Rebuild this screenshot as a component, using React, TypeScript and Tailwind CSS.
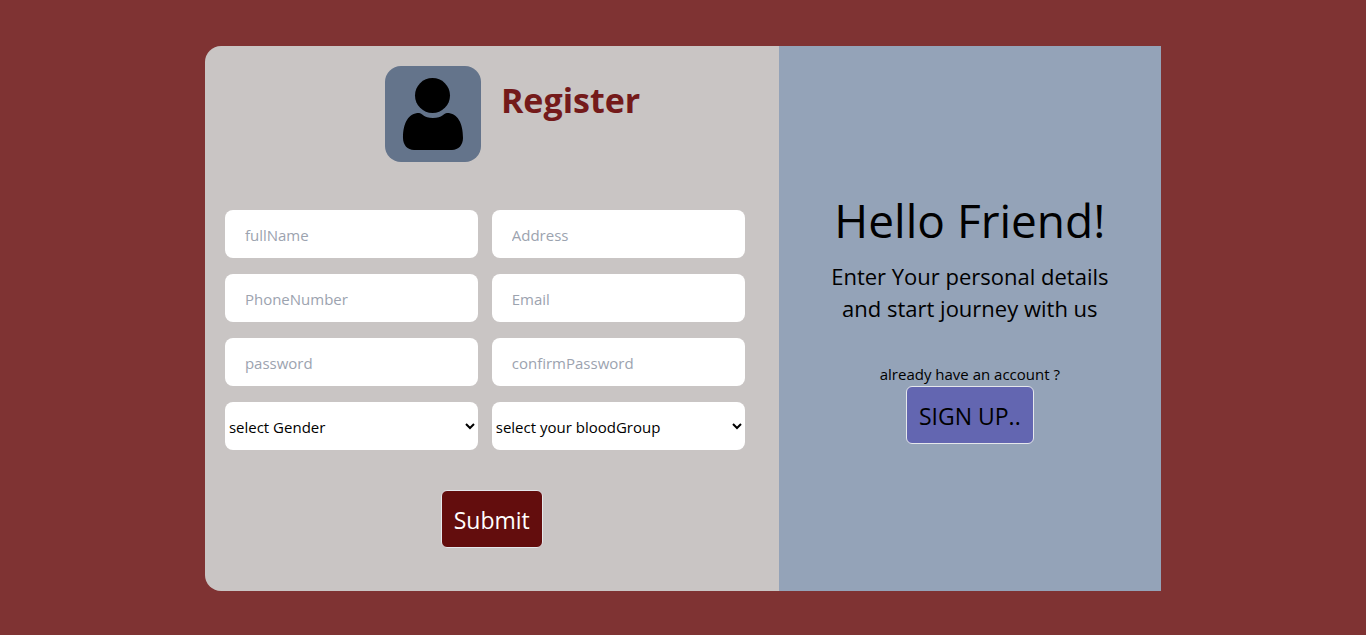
const fields = [
  { name: "fullName", type: "text" },
  { name: "Address", type: "text" },
  { name: "PhoneNumber", type: "tel" },
  { name: "Email", type: "email" },
  { name: "password", type: "password" },
  { name: "confirmPassword", type: "password" },
];

const selects = [
  { label: "select Gender", options: ["Male", "Female", "Other"] },
  { label: "select your bloodGroup", options: ["A+", "A-", "B+", "B-", "AB+", "AB-", "O+", "O-"] },
];

function Avatar() {
  return (
    <div className="size-24 shrink-0 rounded-2xl bg-[#64748b]">
      <svg viewBox="0 0 96 96" className="size-full" aria-hidden="true">
        <circle cx="47.5" cy="29.5" r="17.5" />
        <path d="M34 47C37 47 38.5 52 48 52C57.500 52 59 47 62 47C72.500 47 78 57 78 72C78 79 73.500 84 67 84H29C22.500 84 18 79 18 72C18 57 23.500 47 34 47Z" />
      </svg>
    </div>
  );
}

function RegisterForm() {
  return (
    <form className="w-3/5 rounded-l-2xl bg-[#c9c5c4] p-5 pb-[43px]" onSubmit={(e) => e.preventDefault()}>
      <div className="ml-40 flex gap-5">
        <Avatar />
        <h1 className="mt-3.5 text-[34px] leading-10 font-bold text-[#741a1a]">Register</h1>
      </div>
      <div className="mt-12 mr-3.5 grid grid-cols-2 gap-x-3.5 gap-y-4">
        {fields.map((f) => (
          <input
            key={f.name}
            type={f.type}
            aria-label={f.name}
            placeholder={f.name}
            className="h-12 w-full min-w-0 rounded-lg bg-white px-5 pt-0.5 text-[15px] placeholder:text-[#9ca3af]"
          />
        ))}
        {selects.map((s) => (
          <select key={s.label} aria-label={s.label} className="h-12 w-full min-w-0 rounded-lg bg-white pt-0.5 text-[15px] text-black">
            <option>{s.label}</option>
            {s.options.map((o) => (
              <option key={o}>{o}</option>
            ))}
          </select>
        ))}
      </div>
      <div className="mt-10 flex justify-center">
        <button type="submit" className="h-[58px] rounded-md border border-gray-200 bg-[#630d0d] px-3 pt-0.5 text-[23px] text-white">
          Submit
        </button>
      </div>
    </form>
  );
}

function Welcome() {
  return (
    <section className="flex w-2/5 flex-col items-center justify-center bg-[#94a3b8] px-6 text-center text-black">
      <h2 className="pt-0.5 text-[46px] leading-[48px] whitespace-nowrap">Hello Friend!</h2>
      <p className="mt-4 text-[22px] leading-8">
        Enter Your personal details
        <br />
        and start journey with us
      </p>
      <p className="mt-[38px] text-[15px] leading-6">already have an account ?</p>
      <button type="button" className="h-[58px] rounded-md border border-gray-200 bg-[#6366b1] px-3 pt-1 text-[23px]">
        SIGN UP..
      </button>
    </section>
  );
}

export default function App() {
  return (
    <main className="flex min-h-screen items-center justify-center bg-[#7f3333] pt-0.5 font-['Open_Sans','Noto_Sans',sans-serif]">
      <div className="flex w-[70%]">
        <RegisterForm />
        <Welcome />
      </div>
    </main>
  );
}
